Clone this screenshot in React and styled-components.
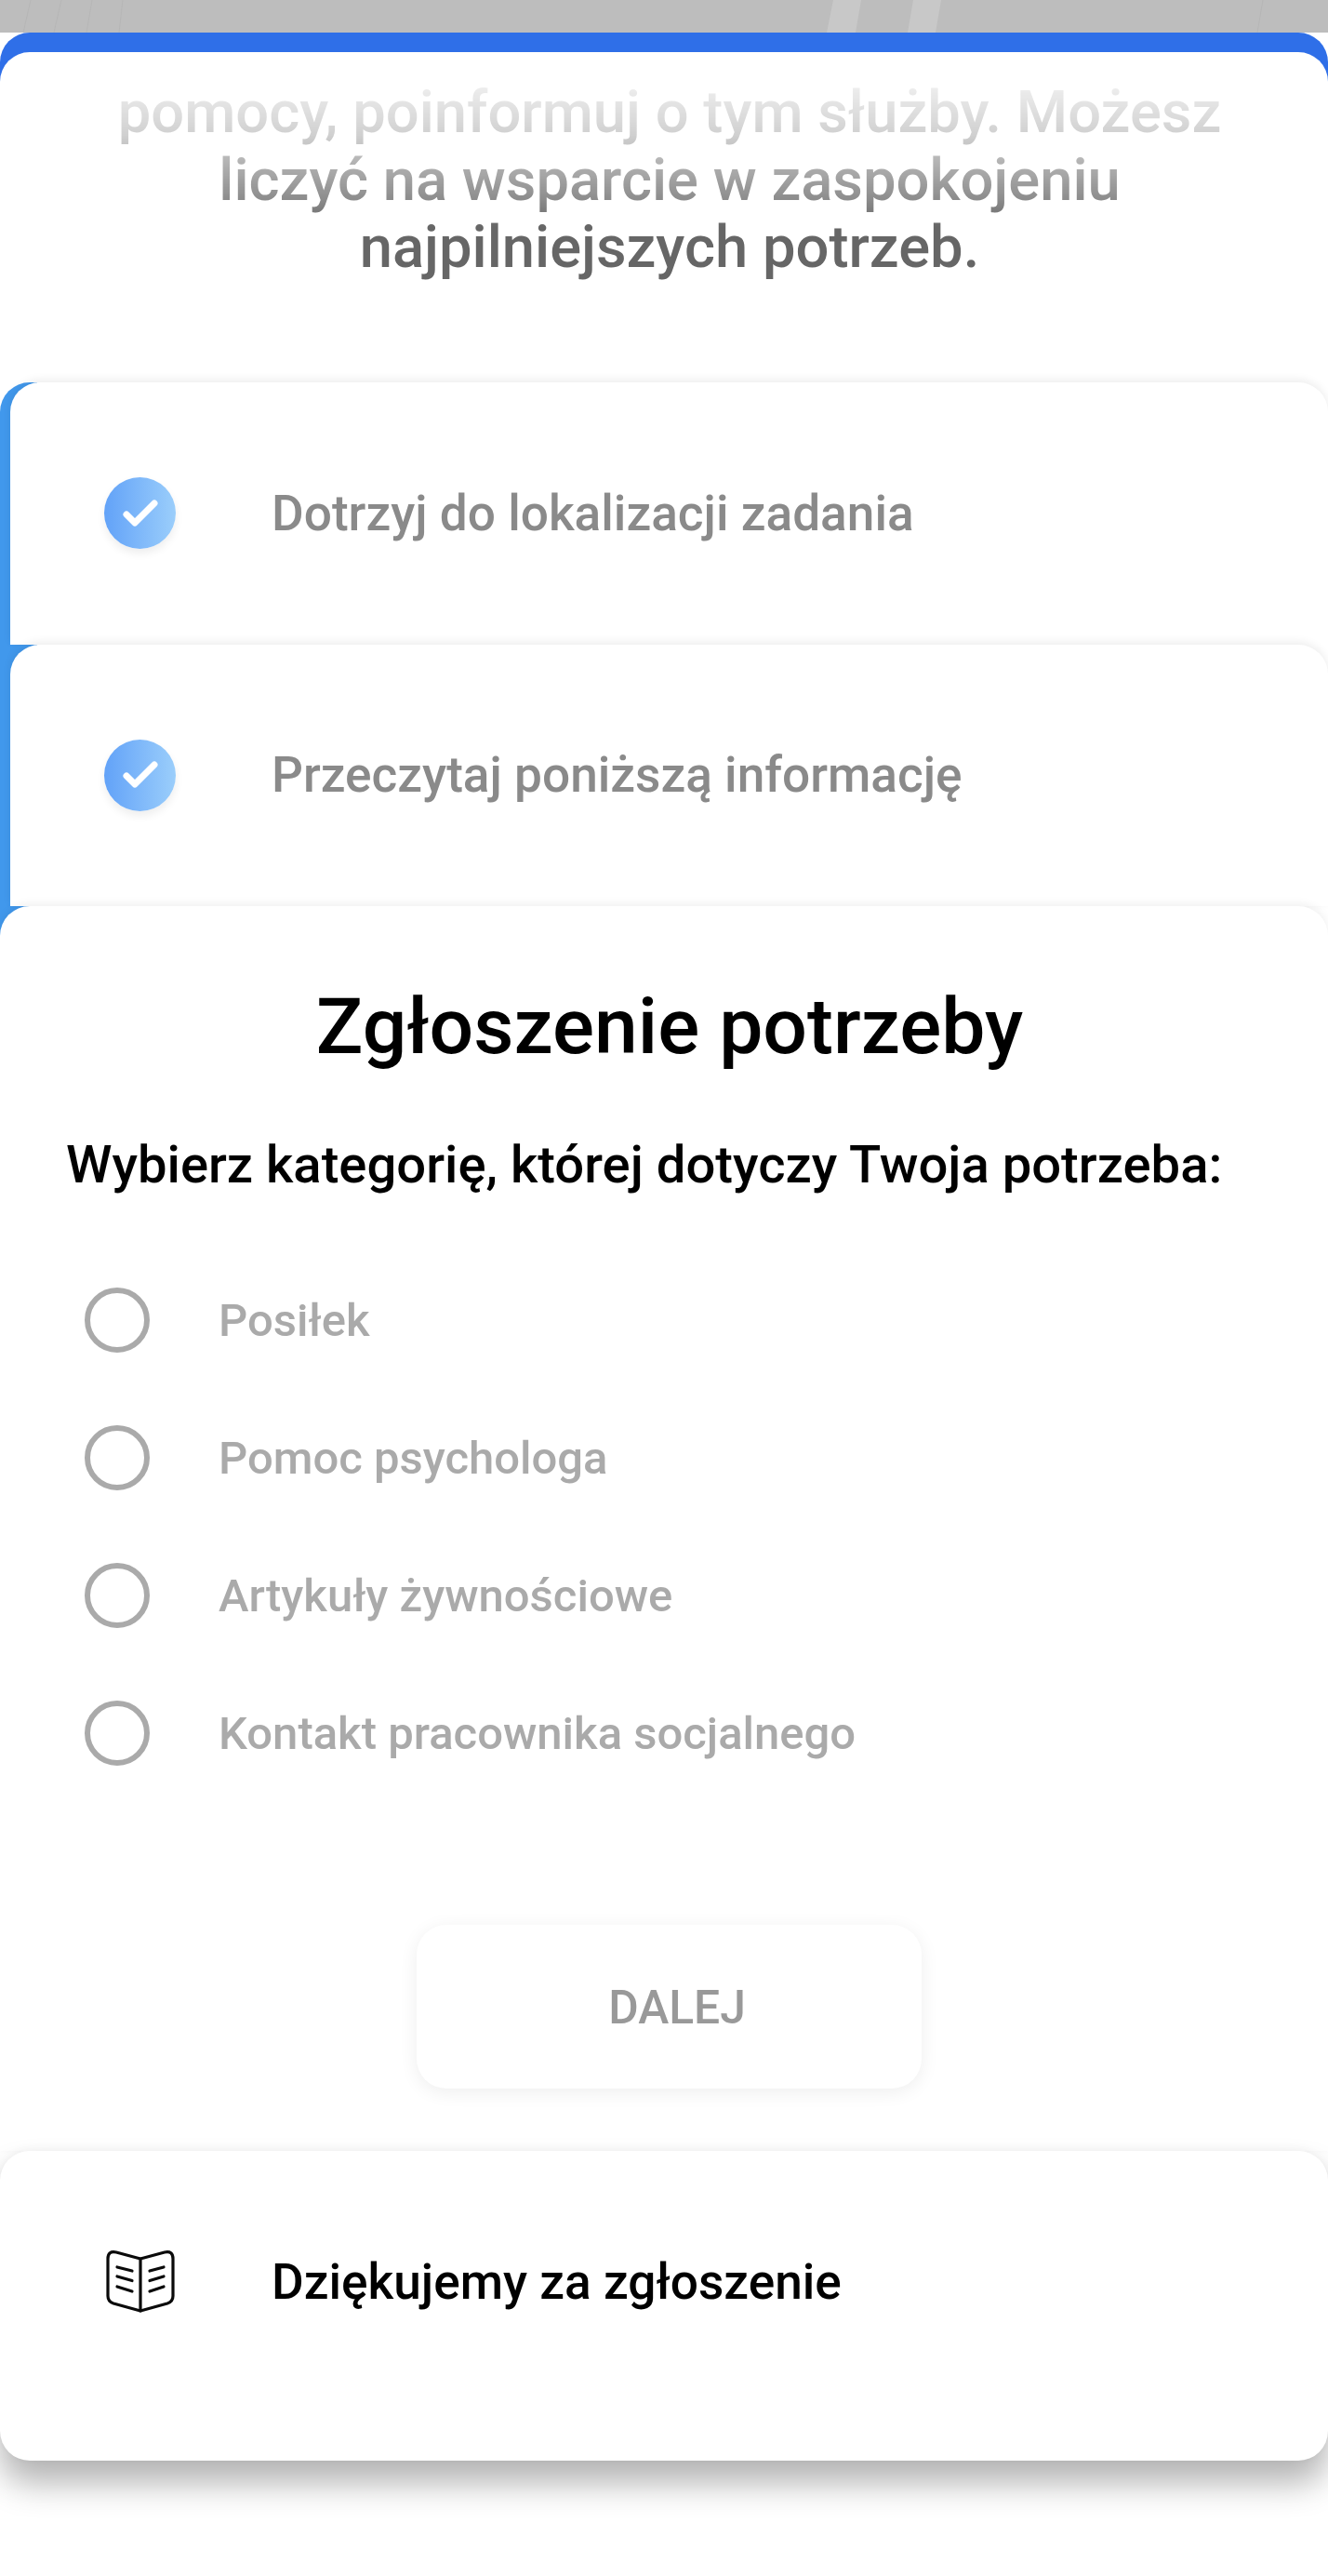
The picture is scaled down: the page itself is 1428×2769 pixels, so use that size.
import React from 'react';
import styled, { createGlobalStyle } from 'styled-components';

const GlobalStyle = createGlobalStyle`
  html, body {
    margin: 0;
    padding: 0;
    background: #fff;
  }
  * {
    box-sizing: border-box;
  }
`;

const Page = styled.div`
  width: 1428px;
  height: 2769px;
  overflow: hidden;
  background: #fff;
  font-family: Roboto, "Liberation Sans", sans-serif;
  font-weight: 500;
`;

const Backdrop = styled.svg`
  display: block;
  width: 1428px;
  height: 35px;
  background: #bdbdbd;
`;

const BlueSheet = styled.div`
  background: #2f6fe8;
  border-radius: 32px 32px 0 0;
  padding-top: 21px;
`;

const InfoPanel = styled.div`
  background: #fff;
  border-radius: 32px 32px 0 0;
  height: 355px;
  padding: 28px 0 0 12px;
`;

const InfoText = styled.p`
  margin: 0;
  color: #666;
  font-size: 63.3px;
  line-height: 72.5px;
  text-align: center;
  white-space: nowrap;
  -webkit-mask-image: linear-gradient(180deg, rgba(0, 0, 0, 0.08) 0, rgba(0, 0, 0, 0.3) 60px, rgba(0, 0, 0, 0.75) 130px, #000 160px);
  mask-image: linear-gradient(180deg, rgba(0, 0, 0, 0.08) 0, rgba(0, 0, 0, 0.3) 60px, rgba(0, 0, 0, 0.75) 130px, #000 160px);
`;

const TextLine = styled.span`
  display: block;
`;

const StepEdge = styled.div`
  background: linear-gradient(90deg, #4198ec 40px, #fff 40px);
  border-radius: 32px 0 0 0;
  padding: 0 0 40px 11px;
  margin-bottom: -40px;
`;

const Row = styled.div`
  display: flex;
  align-items: center;
  height: 281.5px;
  padding-left: ${(p) => p.$inset}px;
`;

const StepCard = styled.div`
  background: #fff;
  border-radius: 32px 32px 0 0;
  box-shadow: 0 -3px 10px rgba(0, 0, 0, 0.07);
`;

const StepBadge = styled.span`
  display: flex;
  align-items: center;
  justify-content: center;
  flex: none;
  width: 77px;
  height: 77px;
  margin-right: 103px;
  border-radius: 50%;
  background: linear-gradient(90deg, #62a2f8, #9bcefb);
  box-shadow: 0 5px 10px rgba(0, 0, 0, 0.07);
`;

const RowLabel = styled.span`
  color: ${(p) => p.$color};
  font-size: 53.2px;
`;

const NeedSheet = styled.section`
  position: relative;
  background: #fff;
  border-radius: 32px 32px 0 0;
  box-shadow: 0 -3px 10px rgba(0, 0, 0, 0.06);
  padding: 80px 0 67px;
`;

const Title = styled.h1`
  margin: 0;
  padding-left: 12px;
  color: #000;
  font-size: 84px;
  font-weight: 500;
  line-height: 100px;
  text-align: center;
`;

const Question = styled.h2`
  margin: 68px 0 63px;
  padding-left: 71px;
  color: #000;
  font-size: 56.2px;
  font-weight: 500;
  line-height: 60px;
  white-space: nowrap;
`;

const OptionRow = styled.label`
  display: flex;
  align-items: center;
  height: 148px;
  padding-left: 91px;
`;

const Radio = styled.span`
  flex: none;
  width: 70px;
  height: 70px;
  margin-right: 74px;
  border: 6px solid #aaa;
  border-radius: 50%;
`;

const OptionLabel = styled.span`
  color: #aaa;
  font-size: 49px;
`;

const NextButton = styled.button`
  display: block;
  width: 543px;
  height: 176px;
  margin: 132px 0 0 448px;
  padding: 2px 0 0 17px;
  border: 0;
  border-radius: 32px;
  background: #fff;
  box-shadow: 0 4px 20px rgba(0, 0, 0, 0.07);
  color: #999;
  font-family: inherit;
  font-size: 49.8px;
  font-weight: 500;
`;

const ThanksCard = styled.section`
  position: relative;
  height: 333px;
  background: #fff;
  border-radius: 32px;
  box-shadow: 0 -2px 8px rgba(0, 0, 0, 0.04), 0 24px 36px rgba(0, 0, 0, 0.3);
`;

const BookWrap = styled.span`
  display: flex;
  flex: none;
  margin-right: 104px;
`;

const BackdropArt = () => (
  <Backdrop viewBox="0 0 1428 35">
    <path d="M896 0 H926 L920 35 H889 Z M982 0 H1012 L1006 35 H976 Z" fill="#c8c8c8" />
    <path d="M33 0 L25 35 M66 0 L58 35 M99 0 L93 35 M132 0 L128 35 M1358 0 L1352 35" stroke="#b6b6b6" strokeWidth="1" fill="none" />
  </Backdrop>
);

const CheckIcon = () => (
  <svg width="40" height="34" viewBox="0 0 40 34" fill="none" stroke="#fff" strokeWidth="7" strokeLinecap="round" strokeLinejoin="round">
    <path d="M5 18 L14 27 L35 6" />
  </svg>
);

const BookIcon = () => (
  <svg width="74" height="67" viewBox="0 0 74 67" fill="none" stroke="#0a0a0a" strokeWidth="3.2" strokeLinecap="round" strokeLinejoin="round">
    <path d="M37 9 L11 2 Q2 0 2 9 V49 Q2 55 8 57 L37 65 L66 57 Q72 55 72 49 V9 Q72 0 63 2 Z" />
    <path d="M37 9 V65" />
    <path d="M12 18 L28 22 M12 28 L28 32.500 M12 39 L28 44" />
    <path d="M47 22 L62 18 M47 32.500 L62 28 M47 44 L62 39" />
  </svg>
);

const steps = ['Dotrzyj do lokalizacji zadania', 'Przeczytaj poniższą informację'];
const options = ['Posiłek', 'Pomoc psychologa', 'Artykuły żywnościowe', 'Kontakt pracownika socjalnego'];

const App = () => {
  return (
    <Page>
      <GlobalStyle />
      <BackdropArt />
      <BlueSheet>
        <InfoPanel>
          <InfoText>
            <TextLine>pomocy, poinformuj o tym służby. Możesz</TextLine>
            <TextLine>liczyć na wsparcie w zaspokojeniu</TextLine>
            <TextLine>najpilniejszych potrzeb.</TextLine>
          </InfoText>
        </InfoPanel>
      </BlueSheet>
      {steps.map((step) => (
        <StepEdge key={step}>
          <StepCard>
            <Row $inset={101}>
              <StepBadge>
                <CheckIcon />
              </StepBadge>
              <RowLabel $color="#8a8a8a">{step}</RowLabel>
            </Row>
          </StepCard>
        </StepEdge>
      ))}
      <NeedSheet>
        <Title>Zgłoszenie potrzeby</Title>
        <Question>Wybierz kategorię, której dotyczy Twoja potrzeba:</Question>
        {options.map((option) => (
          <OptionRow key={option}>
            <Radio />
            <OptionLabel>{option}</OptionLabel>
          </OptionRow>
        ))}
        <NextButton>DALEJ</NextButton>
      </NeedSheet>
      <ThanksCard>
        <Row $inset={114}>
          <BookWrap>
            <BookIcon />
          </BookWrap>
          <RowLabel $color="#000">Dziękujemy za zgłoszenie</RowLabel>
        </Row>
      </ThanksCard>
    </Page>
  );
};

export default App;
